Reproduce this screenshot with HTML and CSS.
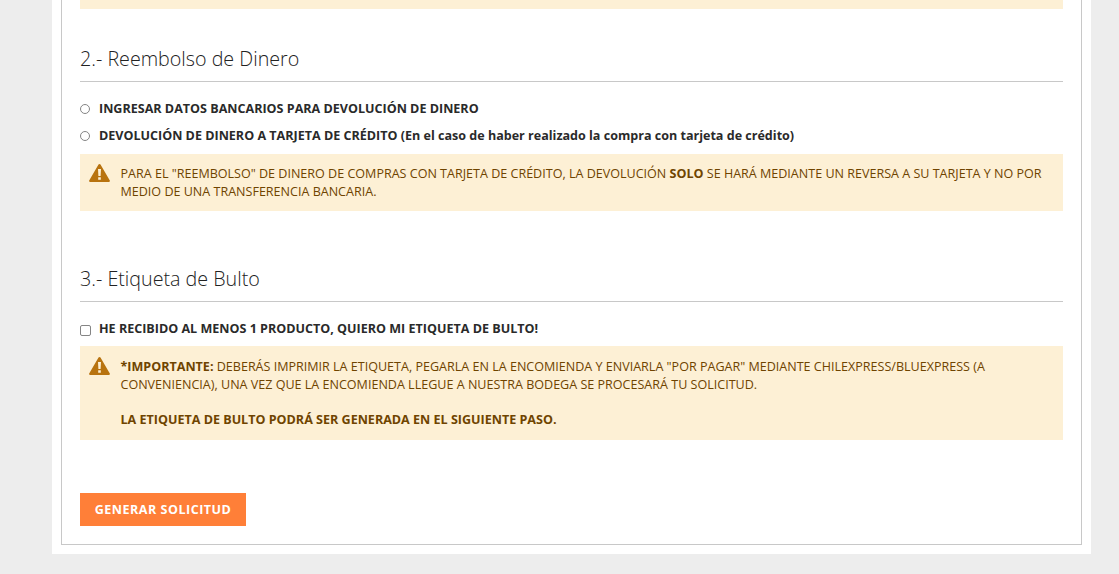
FILE: index.html
```html
<!DOCTYPE html>
<html lang="es">
<head>
<meta charset="utf-8">
<title>Solicitud</title>
<link rel="stylesheet" href="styles.css">
</head>
<body>
<div class="page">
  <div class="panel">
    <div class="alert-stub"></div>

    <section class="section section-refund">
      <h2 class="title">2.- Reembolso de Dinero</h2>
      <label class="option"><input class="control radio" type="radio" name="refund"><span>INGRESAR DATOS BANCARIOS PARA DEVOLUCIÓN DE DINERO</span></label>
      <label class="option"><input class="control radio" type="radio" name="refund"><span>DEVOLUCIÓN DE DINERO A TARJETA DE CRÉDITO (En el caso de haber realizado la compra con tarjeta de crédito)</span></label>
      <div class="alert alert-refund">
        <svg class="warn" viewBox="0 0 21 18" aria-hidden="true"><path d="M10.500 0c.4 0 .8.2 1 .6l9.300 16c.4.6 0 1.400-.8 1.400H1c-.8 0-1.200-.8-.8-1.400L9.500.6c.2-.4.6-.6 1-.6z" fill="#b8730f"/><path d="M9 5h3l-.4 7H9.400z M9.200 13.200h2.600v2.500H9.200z" fill="#fdf0d5"/></svg>
        <p class="alert-text">PARA EL "REEMBOLSO" DE DINERO DE COMPRAS CON TARJETA DE CRÉDITO, LA DEVOLUCIÓN <strong>SOLO</strong> SE HARÁ MEDIANTE UN REVERSA A SU TARJETA Y NO POR MEDIO DE UNA TRANSFERENCIA BANCARIA.</p>
      </div>
    </section>

    <section class="section section-label">
      <h2 class="title">3.- Etiqueta de Bulto</h2>
      <label class="option"><input class="control check" type="checkbox"><span>HE RECIBIDO AL MENOS 1 PRODUCTO, QUIERO MI ETIQUETA DE BULTO!</span></label>
      <div class="alert alert-label">
        <svg class="warn" viewBox="0 0 21 18" aria-hidden="true"><path d="M10.500 0c.4 0 .8.2 1 .6l9.300 16c.4.6 0 1.400-.8 1.400H1c-.8 0-1.200-.8-.8-1.400L9.500.6c.2-.4.6-.6 1-.6z" fill="#b8730f"/><path d="M9 5h3l-.4 7H9.400z M9.200 13.200h2.600v2.500H9.200z" fill="#fdf0d5"/></svg>
        <div class="alert-text">
          <p><strong>*IMPORTANTE:</strong> DEBERÁS IMPRIMIR LA ETIQUETA, PEGARLA EN LA ENCOMIENDA Y ENVIARLA "POR PAGAR" MEDIANTE CHILEXPRESS/BLUEXPRESS (A CONVENIENCIA), UNA VEZ QUE LA ENCOMIENDA LLEGUE A NUESTRA BODEGA SE PROCESARÁ TU SOLICITUD.</p>
          <p class="alert-note"><strong>LA ETIQUETA DE BULTO PODRÁ SER GENERADA EN EL SIGUIENTE PASO.</strong></p>
        </div>
      </div>
    </section>

    <button class="submit" type="button">GENERAR SOLICITUD</button>
  </div>
</div>
</body>
</html>
```
FILE: styles.css
```css
* { box-sizing: border-box; }
html, body { margin: 0; height: 100%; overflow: hidden; }
body {
  background: #ededed;
  font-family: "Open Sans", sans-serif;
  color: #222;
}
.page {
  width: 1039px;
  height: 554px;
  margin-left: 52px;
  padding: 0 9px 9px;
  background: #fff;
}
.panel {
  height: 100%;
  padding: 0 18px;
  border: 1px solid #c8c8c8;
  border-top: 0;
}
.alert-stub { height: 9px; background: #fdf0d5; }
.section-refund { padding-top: 36px; }
.section-label { padding-top: 54px; }
.title {
  margin: 0 0 13px;
  padding-bottom: 8px;
  height: 37px;
  border-bottom: 1px solid #c8c8c8;
  font-size: 19.7px;
  line-height: 28px;
  font-weight: 300;
  color: #222;
}
.option {
  display: flex;
  align-items: center;
  height: 27px;
  font-size: 12.55px;
  font-weight: 700;
  line-height: 27px;
  color: #2a2a2a;
}
.control {
  flex: none;
  appearance: none;
  margin: 0 9px 0 0;
  background: #fff;
  border: 1px solid #858585;
}
.radio { width: 10px; height: 10px; border-radius: 50%; }
.check { width: 11px; height: 11px; margin: 4px 8px 0 0; border-radius: 2px; }
.alert {
  display: flex;
  margin-top: 5px;
  padding: 11px 20px 10px 9px;
  background: #fdf0d5;
  color: #6f4400;
  font-size: 12.56px;
  line-height: 18px;
}
.warn { flex: none; width: 21px; height: 18px; margin: -1px 10.500px 0 0; }
.alert-text { margin: 0; }
.alert-text p { margin: 0; }
.alert-text .alert-note { margin-top: 17px; }
.alert-refund { height: 57px; }
.alert-label { height: 94px; margin-top: 4px; padding-top: 12px; }
.submit {
  display: block;
  width: 166px;
  height: 33px;
  margin-top: 53px;
  padding: 0;
  border: 0;
  background: #ff7f38;
  color: #fff;
  font-family: inherit;
  font-size: 12.55px;
  font-weight: 700;
  letter-spacing: .5px;
}
```
